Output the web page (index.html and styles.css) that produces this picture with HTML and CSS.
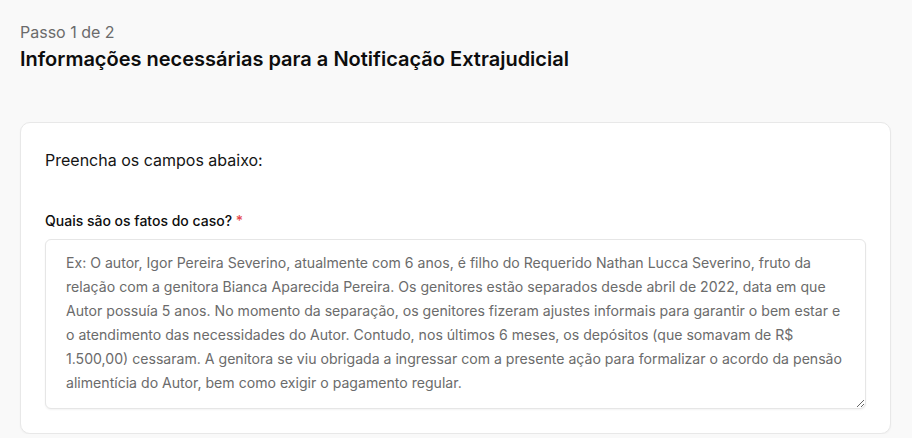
FILE: index.html
```html
<!DOCTYPE html>
<html lang="pt-BR">
<head>
<meta charset="utf-8">
<title>Notificação Extrajudicial</title>
<link rel="stylesheet" href="styles.css">
</head>
<body>
<main class="page">
  <header class="heading">
    <p class="step">Passo 1 de 2</p>
    <h1 class="title">Informações necessárias para a Notificação Extrajudicial</h1>
  </header>
  <section class="card">
    <p class="intro">Preencha os campos abaixo:</p>
    <div class="field">
      <label class="label" for="fatos">Quais são os fatos do caso? <span class="req">*</span></label>
      <textarea id="fatos" class="textarea" placeholder="Ex: O autor, Igor Pereira Severino, atualmente com 6 anos, é filho do Requerido Nathan Lucca Severino, fruto da relação com a genitora Bianca Aparecida Pereira. Os genitores estão separados desde abril de 2022, data em que Autor possuía 5 anos. No momento da separação, os genitores fizeram ajustes informais para garantir o bem estar e o atendimento das necessidades do Autor. Contudo, nos últimos 6 meses, os depósitos (que somavam de R$ 1.500,00) cessaram. A genitora se viu obrigada a ingressar com a presente ação para formalizar o acordo da pensão alimentícia do Autor, bem como exigir o pagamento regular."></textarea>
    </div>
  </section>
</main>
</body>
</html>
```

FILE: styles.css
```css
* { box-sizing: border-box; }
html, body { margin: 0; padding: 0; }
body {
  background: #f9f9f9;
  font-family: Inter, "Noto Sans", sans-serif;
  color: #111111;
}
.page {
  padding: 20px 21px 0 20px;
}
.step {
  margin: 0;
  font-size: 16px;
  line-height: 24px;
  color: #6b6b6b;
}
.title {
  margin: 1px 0 0;
  font-size: 20px;
  line-height: 28px;
  font-weight: 600;
  color: #0d0d0d;
}
.card {
  margin-top: 49px;
  background: #ffffff;
  border: 1px solid #e8e8e8;
  border-radius: 10px;
  box-shadow: 0 1px 2px rgba(0,0,0,0.04);
  padding: 25px 24px 24px 24px;
}
.intro {
  margin: 0;
  font-size: 16px;
  line-height: 24px;
  color: #141414;
}
.field {
  margin-top: 39px;
  display: flex;
  flex-direction: column;
  gap: 8px;
}
.label {
  font-size: 14px;
  line-height: 20px;
  font-weight: 500;
  color: #0d0d0d;
}
.req { color: #e5484d; }
.textarea {
  width: 100%;
  height: 170px;
  border: 1px solid #e6e6e6;
  border-radius: 6px;
  padding: 11px 20px;
  font-family: Inter, "Noto Sans", sans-serif;
  font-size: 14.1px;
  line-height: 24px;
  color: #111;
  background: #fff;
  box-shadow: 0 1px 2px rgba(0,0,0,0.05);
  outline: none;
}
.textarea::placeholder {
  color: #6b6b6b;
  opacity: 1;
}
```
